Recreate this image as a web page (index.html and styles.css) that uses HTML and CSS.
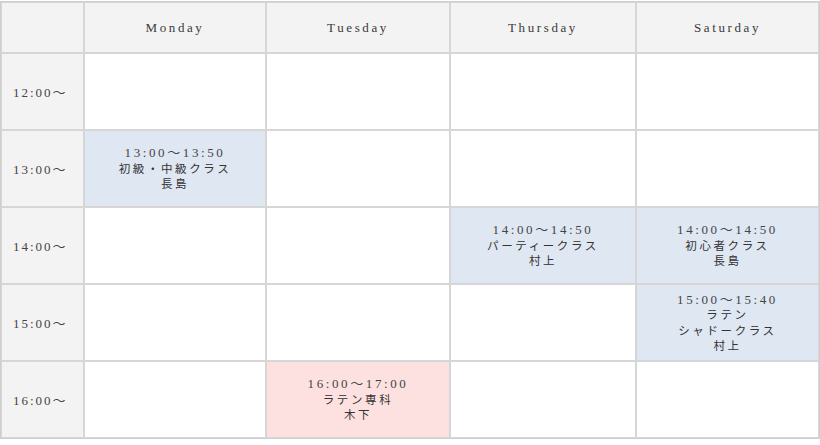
FILE: index.html
```html
<!DOCTYPE html>
<html lang="ja">
<head>
<meta charset="utf-8">
<link rel="stylesheet" href="styles.css">
</head>
<body>
<table class="schedule">
  <colgroup>
    <col class="col-time">
    <col class="col-mon">
    <col class="col-tue">
    <col class="col-thu">
    <col class="col-sat">
  </colgroup>
  <thead>
    <tr class="head-row">
      <th class="corner"></th>
      <th class="day">Monday</th>
      <th class="day">Tuesday</th>
      <th class="day">Thursday</th>
      <th class="day">Saturday</th>
    </tr>
  </thead>
  <tbody>
    <tr class="slot-row">
      <th class="time">12:00〜</th>
      <td></td><td></td><td></td><td></td>
    </tr>
    <tr class="slot-row">
      <th class="time">13:00〜</th>
      <td class="lesson blue"><span class="hours">13:00〜13:50</span><br>初級・中級クラス<br>長島</td>
      <td></td><td></td><td></td>
    </tr>
    <tr class="slot-row">
      <th class="time">14:00〜</th>
      <td></td><td></td>
      <td class="lesson blue"><span class="hours">14:00〜14:50</span><br>パーティークラス<br>村上</td>
      <td class="lesson blue"><span class="hours">14:00〜14:50</span><br>初心者クラス<br>長島</td>
    </tr>
    <tr class="slot-row">
      <th class="time">15:00〜</th>
      <td></td><td></td><td></td>
      <td class="lesson blue"><span class="hours">15:00〜15:40</span><br>ラテン<br>シャドークラス<br>村上</td>
    </tr>
    <tr class="slot-row">
      <th class="time">16:00〜</th>
      <td></td>
      <td class="lesson pink"><span class="hours">16:00〜17:00</span><br>ラテン専科<br>木下</td>
      <td></td><td></td>
    </tr>
  </tbody>
</table>
</body>
</html>
```
FILE: styles.css
```css
html, body {
  margin: 0;
  padding: 0;
  background: #ffffff;
}
body {
  padding-top: 1px;
}
.schedule {
  width: 820px;
  table-layout: fixed;
  border-collapse: separate;
  border-spacing: 0;
  border: 1px solid #cfcfcf;
  font-family: "Liberation Serif", "Noto Sans CJK JP", serif;
  color: #3a3a3a;
}
.col-time { width: 83px; }
.col-mon { width: 182px; }
.col-tue { width: 184px; }
.col-thu { width: 186px; }
.schedule th,
.schedule td {
  border: 1px solid #d6d6d6;
  padding: 0;
}
.head-row th {
  height: 49px;
  background: #f3f3f3;
  font-weight: normal;
  font-size: 13px;
  letter-spacing: 2.6px;
  text-align: center;
  vertical-align: middle;
  color: #3a3a3a;
}
.slot-row th,
.slot-row td {
  height: 75px;
}
.time {
  background: #f3f3f3;
  font-weight: normal;
  font-size: 13px;
  letter-spacing: 2px;
  text-align: left;
  padding-left: 11px !important;
  vertical-align: middle;
  color: #444;
}
.lesson {
  text-align: center;
  vertical-align: middle;
  font-family: "Noto Sans CJK JP", sans-serif;
  font-size: 11.5px;
  line-height: 15.5px;
  letter-spacing: 2.6px;
  color: #333;
}
.hours {
  font-family: "Liberation Serif", "Noto Sans CJK JP", serif;
  font-size: 13px;
  letter-spacing: 2.6px;
  color: #444;
}
.blue { background: #dfe7f3; }
.pink { background: #fde1e1; }
```
